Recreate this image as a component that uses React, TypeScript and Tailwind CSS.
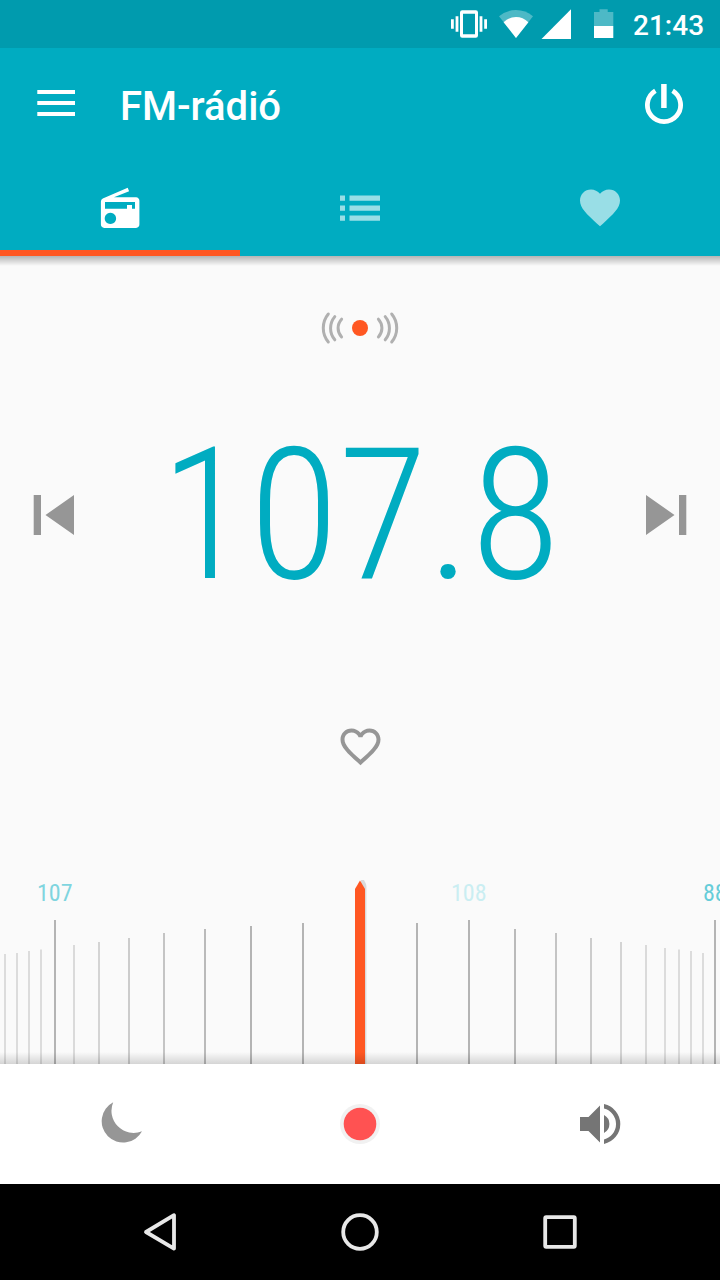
import React from 'react';

const ticks = [
  { x: 5, top: 954, color: '#dcdcdc' },
  { x: 17, top: 953, color: '#dcdcdc' },
  { x: 29, top: 951, color: '#dcdcdc' },
  { x: 41, top: 949.5, color: '#dcdcdc' },
  { x: 55, top: 920, color: '#b4b4b4' },
  { x: 74, top: 945, color: '#dadada' },
  { x: 99, top: 942, color: '#d4d4d4' },
  { x: 129, top: 938, color: '#cccccc' },
  { x: 164, top: 933, color: '#c4c4c4' },
  { x: 205, top: 929, color: '#bababa' },
  { x: 251, top: 926, color: '#b4b4b4' },
  { x: 303, top: 923, color: '#b4b4b4' },
  { x: 417, top: 923, color: '#b4b4b4' },
  { x: 469, top: 920, color: '#b4b4b4' },
  { x: 515, top: 929, color: '#bababa' },
  { x: 556, top: 933, color: '#c4c4c4' },
  { x: 591, top: 938, color: '#cccccc' },
  { x: 621, top: 942, color: '#d4d4d4' },
  { x: 646, top: 945, color: '#dadada' },
  { x: 665, top: 948, color: '#dcdcdc' },
  { x: 679, top: 949.5, color: '#dcdcdc' },
  { x: 691, top: 951, color: '#dcdcdc' },
  { x: 703, top: 953, color: '#dcdcdc' },
  { x: 715, top: 920, color: '#b4b4b4' }
];

const StatusBar = () => (
  <div className="flex h-12 items-center bg-[#009bae] pl-[451px] text-white">
    <svg className="h-12 w-9 shrink-0" viewBox="451 0 36 48" fill="currentColor">
      <path d="M451 19.3h2.8v9.4H451zM455.6 16.3h2.8v15.4h-2.8zM479.6 16.3h2.8v15.4h-2.8zM484.2 19.3h2.8v9.4h-2.8z" />
      <path fillRule="evenodd" d="M462.2 10.2h13.6a2.2 2.2 0 0 1 2.2 2.2v23.2a2.2 2.2 0 0 1-2.2 2.2h-13.6a2.2 2.2 0 0 1-2.2-2.2V12.4a2.2 2.2 0 0 1 2.2-2.2zM463 13.7v20.6h12V13.7z" />
    </svg>
    <svg className="ml-3 h-12 w-[35px] shrink-0" viewBox="499 0 35 48" fill="currentColor">
      <path opacity=".3" d="M516 38L499 16.2Q506.5 10 516 10T533 16.2z" />
      <path d="M516 38L503.6 22.2Q509 17 516 17T528.4 22.2z" />
    </svg>
    <svg className="ml-[7px] h-12 w-[30px] shrink-0" viewBox="541 0 30 48" fill="currentColor">
      <path d="M541.5 39H571V9.3z" />
    </svg>
    <svg className="ml-[23px] h-12 w-5 shrink-0" viewBox="594 0 20 48" fill="currentColor">
      <path opacity=".3" d="M594 26V12h5.5V9.3h8.2V12h5.6v14z" />
      <path d="M594 26h19.3v12H594z" />
    </svg>
    <span className="mt-[3px] ml-[19px] text-[28px] leading-none font-medium">21:43</span>
  </div>
);

const AppBar = () => (
  <header className="relative z-10 shrink-0 bg-[#00acc1] text-white">
    <div className="flex h-28 items-center px-9">
      <svg className="h-28 w-10" viewBox="36 48 40 112" fill="currentColor">
        <path d="M37.3 90H75v4H37.3zM37.3 101H75v4H37.3zM37.3 112H75v4H37.3z" />
      </svg>
      <h1 className="mt-1.5 ml-11 flex-1 text-[40px] leading-none font-medium">FM-rádió</h1>
      <svg className="h-28 w-10" viewBox="644 48 40 112" fill="none" stroke="currentColor" strokeWidth="4.8">
        <path d="M655.4 90.8A16.6 16.6 0 1 0 672.6 90.8" />
        <path d="M663.9 84v24" strokeWidth="5.5" />
      </svg>
    </div>
    <nav className="grid h-24 grid-cols-3">
      <button className="flex items-center justify-center border-b-[6px] border-[#ff5722]">
        <svg className="mt-1.5 h-12 w-12" viewBox="96 184 48 48" fill="currentColor">
          <path
            fillRule="evenodd"
            d="M102.8 198.4L127.7 187.7L129.1 191.3L114 197.3H136a3.4 3.4 0 0 1 3.4 3.8v23a3.4 3.4 0 0 1-3.4 3.8H104.3a3.4 3.4 0 0 1-3.4-3.8V201.5Q100.9 199.3 102.8 198.4zM105 202v6.7h22V205h5v3.7h3V202zM110.4 212.7a5.7 5.7 0 1 0 .01 0z"
          />
        </svg>
      </button>
      <button className="flex items-center justify-center">
        <svg className="h-12 w-12" viewBox="336 184 48 48" fill="#99dee6">
          <path d="M340 195.4h5v5.3h-5zM349.5 195.4H380v5.3h-30.5zM340 205.4h5v5.3h-5zM349.5 205.4H380v5.3h-30.5zM340 215.4h5v5.3h-5zM349.5 215.4H380v5.3h-30.5z" />
        </svg>
      </button>
      <button className="flex items-center justify-center">
        <svg className="h-12 w-12" viewBox="0 .2 24 24" fill="#99dee6">
          <path d="M12 21.35l-1.45-1.32C5.4 15.36 2 12.28 2 8.5 2 5.42 4.42 3 7.5 3c1.74 0 3.41.81 4.5 2.09C13.09 3.81 14.76 3 16.5 3 19.58 3 22 5.42 22 8.5c0 3.78-3.4 6.86-8.55 11.54L12 21.35z" />
        </svg>
      </button>
    </nav>
    <div className="absolute inset-x-0 top-full h-2.5 bg-gradient-to-b from-black/28 to-transparent" />
  </header>
);

const Tuner = () => (
  <main className="flex h-[808px] shrink-0 flex-col items-center bg-[#fafafa]">
    <svg className="mt-12 h-12 w-24" viewBox="312 304 96 48" fill="none" stroke="#b0b0b0" strokeWidth="3" strokeLinecap="round">
      <path d="M328.3 314A22 22 0 0 0 328.3 342M334.8 316.6A18 18 0 0 0 334.8 339.8M341.6 319.2A13 13 0 0 0 341.6 337" />
      <path d="M391.7 314A22 22 0 0 1 391.7 342M385.2 316.6A18 18 0 0 1 385.2 339.8M378.4 319.2A13 13 0 0 1 378.4 337" />
      <circle cx="360" cy="328" r="8" fill="#ff5722" stroke="none" />
    </svg>
    <div className="mt-[55px] flex h-[216px] w-full items-center justify-between px-[34px]">
      <svg className="h-10 w-10 overflow-visible" viewBox="34 495 40 40" fill="#969696">
        <path d="M33.7 495H41v40h-7.300zM74 495v40l-28.5-20z" />
      </svg>
      <div className="text-[184px] leading-[216px] font-light tracking-[-0.5px] text-[#00acc1] [font-stretch:75%]">107.8</div>
      <svg className="h-10 w-10 overflow-visible" viewBox="646 495 40 40" fill="#969696">
        <path d="M679 495h7.3v40H679zM646 495v40l28.5-20z" />
      </svg>
    </div>
    <svg className="mt-[99px] h-12 w-12" viewBox="-.25 -.25 24 24" fill="#969696">
      <path d="M16.5 3c-1.74 0-3.41.81-4.5 2.09C10.91 3.81 9.24 3 7.5 3 4.42 3 2 5.42 2 8.5c0 3.78 3.4 6.86 8.55 11.54L12 21.35l1.45-1.32C18.6 15.36 22 12.28 22 8.5 22 5.42 19.58 3 16.5 3zm-4.4 15.55l-.1.1-.1-.1C7.14 14.24 4 11.39 4 8.5 4 6.5 5.5 5 7.5 5c1.54 0 3.04.99 3.57 2.36h1.87C13.46 5.99 14.96 5 16.5 5c2 0 3.5 1.5 3.5 3.5 0 2.89-3.14 5.74-7.9 10.05z" />
    </svg>
    <div className="relative mt-auto h-[192px] w-full overflow-hidden">
      {/* frequency scale */}
      <svg className="h-full w-full" viewBox="0 872 720 192">
        {ticks.map((tick) => (
          <rect key={tick.x} x={tick.x - 1} y={tick.top} width="2" height={1064 - tick.top} fill={tick.color} />
        ))}
        <path d="M361 880h3l2 4v180h-3z" fill="#000" opacity=".08" />
        <path d="M361 880h3l3 6v178h-3z" fill="#000" opacity=".05" />
        <path d="M355 889l5-8.5 5 8.5v175h-10z" fill="#ff5722" />
      </svg>
      <span className="absolute top-[9px] left-[37px] text-2xl leading-none text-[#7fd5df] [font-stretch:75%]">107</span>
      <span className="absolute top-[9px] left-[451px] text-2xl leading-none text-[#caeef2] [font-stretch:75%]">108</span>
      <span className="absolute top-[9px] left-[703px] text-2xl leading-none text-[#66cdd9] [font-stretch:75%]">88</span>
      <div className="absolute inset-x-0 bottom-0 h-3 bg-gradient-to-t from-black/15 to-transparent" />
    </div>
  </main>
);

const ActionBar = () => (
  <div className="grid h-[120px] shrink-0 grid-cols-3 place-items-center bg-white">
    <svg className="h-12 w-12" viewBox="96 1100 48 48" fill="#969696">
      <path d="M113.2 1102.2A22.1 22.1 0 0 0 142 1131.2A21.4 21.4 0 1 1 113.2 1102.2z" />
    </svg>
    <svg className="h-12 w-12" viewBox="336 1100 48 48">
      <circle cx="360" cy="1124" r="20" fill="#f1f1f1" />
      <circle cx="360" cy="1124" r="16.3" fill="#ff5252" />
    </svg>
    <svg className="h-12 w-12" viewBox="576 1100 48 48" fill="#757575">
      <path d="M580 1117h8.5L600 1105.5v37L588.5 1131H580zM604 1115a10.2 10.2 0 0 1 0 18z" />
      <path d="M604 1104.1a20.3 20.3 0 0 1 0 39.8v-4.4a16 16 0 0 0 0-31z" />
    </svg>
  </div>
);

const NavigationBar = () => (
  <div className="flex h-24 shrink-0 items-center justify-center gap-[152px] bg-black">
    <svg className="h-12 w-12" viewBox="136 1208 48 48" fill="none" stroke="#e8e8e8" strokeWidth="3.8" strokeLinejoin="round">
      <path d="M174 1215.2v33.4L146 1232z" />
    </svg>
    <svg className="h-12 w-12" viewBox="336 1208 48 48" fill="none" stroke="#e8e8e8" strokeWidth="3.8">
      <circle cx="360" cy="1232" r="16.8" />
    </svg>
    <svg className="h-12 w-12" viewBox="536 1208 48 48" fill="none" stroke="#e8e8e8" strokeWidth="3.8">
      <rect x="545.2" y="1217.2" width="29.6" height="29.6" rx="1" />
    </svg>
  </div>
);

const App = () => {
  return (
    <div className="flex h-[1280px] w-[720px] flex-col overflow-hidden font-[Roboto,sans-serif]">
      <StatusBar />
      <AppBar />
      <Tuner />
      <ActionBar />
      <NavigationBar />
    </div>
  );
};

export default App;
